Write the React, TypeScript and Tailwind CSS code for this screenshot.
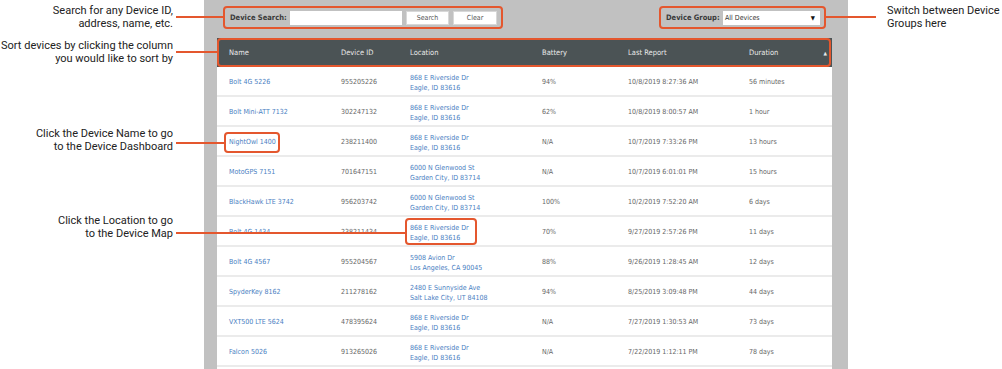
import React from "react";

type Row = {
  name: string;
  id: string;
  l1: string;
  l2: string;
  bat: string;
  last: string;
  dur: string;
};

const rows: Row[] = [
  { name: "Bolt 4G 5226", id: "955205226", l1: "868 E Riverside Dr", l2: "Eagle, ID 83616", bat: "94%", last: "10/8/2019 8:27:36 AM", dur: "56 minutes" },
  { name: "Bolt Mini-ATT 7132", id: "302247132", l1: "868 E Riverside Dr", l2: "Eagle, ID 83616", bat: "62%", last: "10/8/2019 8:00:57 AM", dur: "1 hour" },
  { name: "NightOwl 1400", id: "238211400", l1: "868 E Riverside Dr", l2: "Eagle, ID 83616", bat: "N/A", last: "10/7/2019 7:33:26 PM", dur: "13 hours" },
  { name: "MotoGPS 7151", id: "701647151", l1: "6000 N Glenwood St", l2: "Garden City, ID 83714", bat: "N/A", last: "10/7/2019 6:01:01 PM", dur: "15 hours" },
  { name: "BlackHawk LTE 3742", id: "956203742", l1: "6000 N Glenwood St", l2: "Garden City, ID 83714", bat: "100%", last: "10/2/2019 7:52:20 AM", dur: "6 days" },
  { name: "Bolt 4G 1434", id: "238211434", l1: "868 E Riverside Dr", l2: "Eagle, ID 83616", bat: "70%", last: "9/27/2019 2:57:26 PM", dur: "11 days" },
  { name: "Bolt 4G 4567", id: "955204567", l1: "5908 Avion Dr", l2: "Los Angeles, CA 90045", bat: "88%", last: "9/26/2019 1:28:45 AM", dur: "12 days" },
  { name: "SpyderKey 8162", id: "211278162", l1: "2480 E Sunnyside Ave", l2: "Salt Lake City, UT 84108", bat: "94%", last: "8/25/2019 3:09:48 PM", dur: "44 days" },
  { name: "VXT500 LTE 5624", id: "478395624", l1: "868 E Riverside Dr", l2: "Eagle, ID 83616", bat: "N/A", last: "7/27/2019 1:30:53 AM", dur: "73 days" },
  { name: "Falcon 5026", id: "913265026", l1: "868 E Riverside Dr", l2: "Eagle, ID 83616", bat: "N/A", last: "7/22/2019 1:12:11 PM", dur: "78 days" },
];

const grid = "grid grid-cols-[124px_69px_132px_86px_121px_83px]";

function Note({ top, lines }: { top: number; lines: string[] }) {
  return (
    <div
      className="absolute right-[31px] text-right text-[11px] leading-[13px] text-[#222] font-['Roboto',sans-serif] whitespace-nowrap"
      style={{ top }}
    >
      {lines.map((l) => (
        <div key={l}>{l}</div>
      ))}
    </div>
  );
}

export default function App() {
  return (
    <div className="relative w-[1002px] h-[369px] overflow-hidden bg-white flex font-['DejaVu_Sans_Condensed','Liberation_Sans',sans-serif]">
      {/* left annotation column */}
      <div className="relative w-[204px] h-full shrink-0">
        <Note top={4} lines={["Search for any Device ID,", "address, name, etc."]} />
        <Note top={39} lines={["Sort devices by clicking the column", "you would like to sort by"]} />
        <Note top={127} lines={["Click the Device Name to go", "to the Device Dashboard"]} />
        <Note top={214} lines={["Click the Location to go", "to the Device Map"]} />
      </div>

      {/* gray panel */}
      <div className="w-[644px] h-full shrink-0 bg-[#c1c1c1] pl-[13px] pr-[16px] flex flex-col">
        {/* toolbar */}
        <div className="h-[38px] shrink-0 flex items-start justify-between pt-[11px]">
          <div className="flex items-center pl-[13px]">
            <span className="text-[7.5px] font-bold text-[#3a3a3a] w-[60px]">Device Search:</span>
            <div className="w-[112px] h-[14px] bg-white" />
            <button className="ml-[4px] w-[43px] h-[14px] bg-white border border-[#d8d8d8] text-[7px] text-[#555] flex items-center justify-center">
              Search
            </button>
            <button className="ml-[4px] w-[44px] h-[14px] bg-white border border-[#d8d8d8] text-[7px] text-[#555] flex items-center justify-center">
              Clear
            </button>
          </div>
          <div className="flex items-center pr-[12px]">
            <span className="text-[7.5px] font-bold text-[#3a3a3a] w-[57px]">Device Group:</span>
            <div className="w-[97px] h-[14px] bg-white flex items-center justify-between pl-[2px] pr-[5px]">
              <span className="text-[7px] text-[#333]">All Devices</span>
              <span className="text-[6px] text-[#111] leading-none">▼</span>
            </div>
          </div>
        </div>

        {/* table */}
        <div className="flex-1 bg-white flex flex-col">
          <div className={`${grid} h-[29px] shrink-0 items-center bg-[#4b5355] text-[7.5px] text-[#e8e8e8] pt-[1px]`}>
            <div className="pl-[12px]">Name</div>
            <div>Device ID</div>
            <div>Location</div>
            <div>Battery</div>
            <div>Last Report</div>
            <div className="flex items-center justify-between pr-[5px]">
              <span>Duration</span>
              <span className="text-[5px] leading-none">▲</span>
            </div>
          </div>
          {rows.map((r) => (
            <div
              key={r.id}
              className={`${grid} h-[30px] shrink-0 items-center border-b-2 border-[#ebebeb] text-[7px] pt-[3px]`}
            >
              <div className="pl-[12px] text-[#4a80c2]">{r.name}</div>
              <div className="text-[#666]">{r.id}</div>
              <div className="text-[#4a80c2] leading-[10px]">
                <div>{r.l1}</div>
                <div>{r.l2}</div>
              </div>
              <div className="text-[#666]">{r.bat}</div>
              <div className="text-[#666]">{r.last}</div>
              <div className="text-[#666]">{r.dur}</div>
            </div>
          ))}
        </div>
      </div>

      {/* right annotation column */}
      <div className="relative flex-1 h-full">
        <div className="absolute left-[39px] top-[4px] text-[11px] leading-[13px] text-[#222] font-['Roboto',sans-serif] whitespace-nowrap">
          <div>Switch between Device</div>
          <div>Groups here</div>
        </div>
      </div>

      {/* callout boxes */}
      <div className="absolute left-[223px] top-[6px] w-[280px] h-[23px] border-2 border-[#e4572e] rounded-[4px]" />
      <div className="absolute left-[659px] top-[6px] w-[167px] h-[23px] border-2 border-[#e4572e] rounded-[4px]" />
      <div className="absolute left-[217px] top-[38px] w-[614px] h-[29px] border-2 border-[#e4572e] rounded-[4px]" />
      <div className="absolute left-[224px] top-[132px] w-[56px] h-[21px] border-2 border-[#e4572e] rounded-[4px]" />
      <div className="absolute left-[405px] top-[218px] w-[72px] h-[27px] border-2 border-[#e4572e] rounded-[4px]" />

      {/* callout lines */}
      <div className="absolute left-[176px] top-[16px] w-[47px] h-[2px] bg-[#e4572e]" />
      <div className="absolute left-[176px] top-[51px] w-[41px] h-[2px] bg-[#e4572e]" />
      <div className="absolute left-[176px] top-[142px] w-[48px] h-[2px] bg-[#e4572e]" />
      <div className="absolute left-[176px] top-[232px] w-[229px] h-[2px] bg-[#e4572e]" />
      <div className="absolute left-[826px] top-[16px] w-[50px] h-[2px] bg-[#e4572e]" />
    </div>
  );
}
